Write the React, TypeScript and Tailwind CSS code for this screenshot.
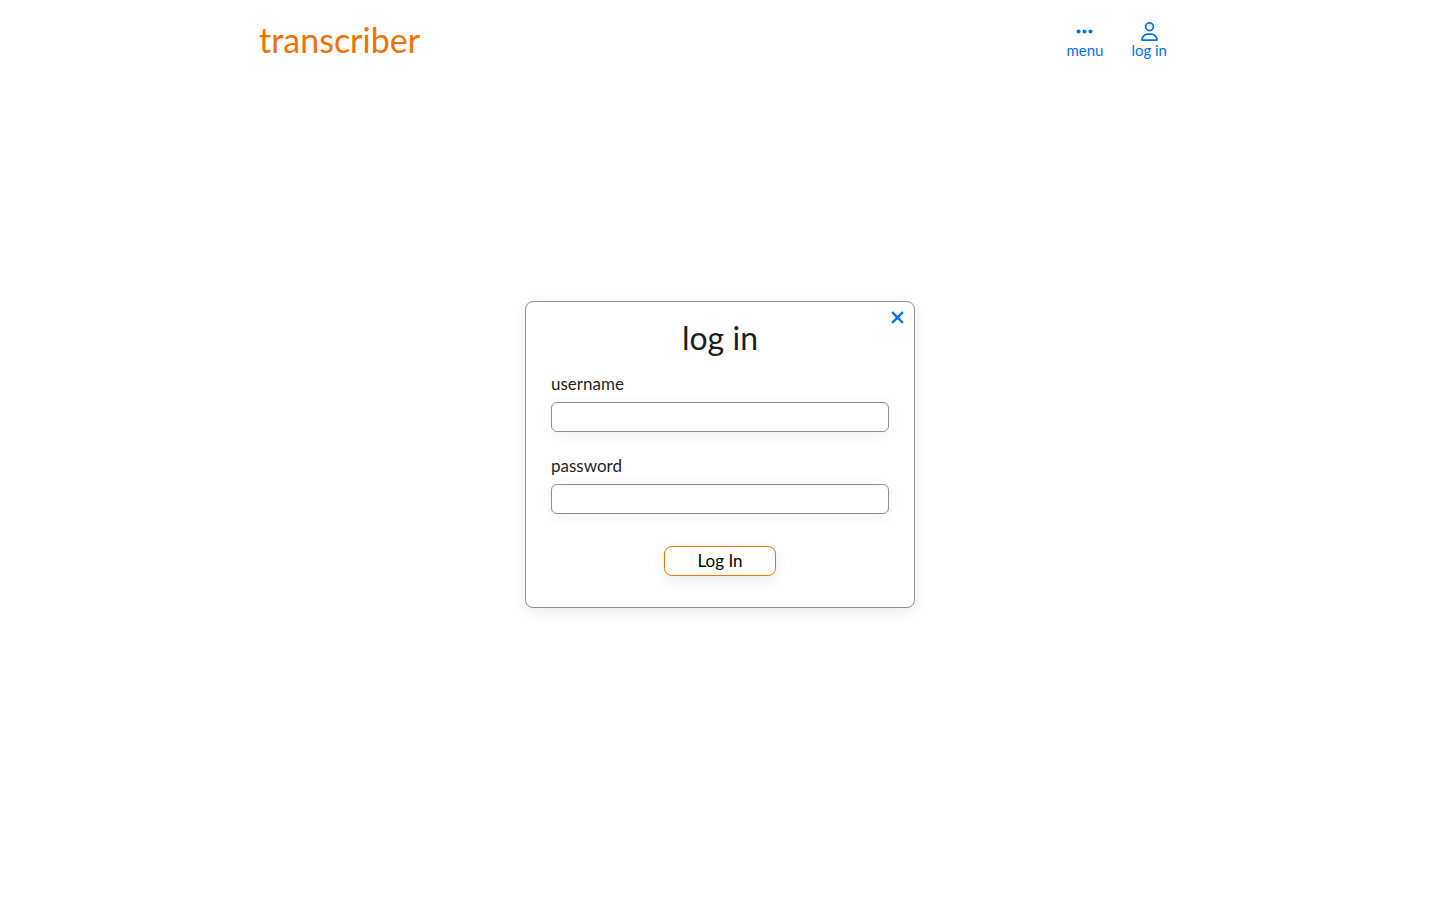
import { FaEllipsis, FaRegUser, FaXmark } from "react-icons/fa6";
import type { ReactNode } from "react";

function NavButton({ icon, label }: { icon: ReactNode; label: string }) {
  return (
    <button type="button" className="flex cursor-pointer flex-col items-center text-[15px] leading-[18px] text-[#0071eb]">
      {icon}
      <span>{label}</span>
    </button>
  );
}

function Field({ id, label, type }: { id: string; label: string; type: string }) {
  return (
    <div className="mb-5 flex flex-col">
      <label htmlFor={id} className="mb-1 text-[17px] leading-7">
        {label}
      </label>
      <input
        id={id}
        type={type}
        className="h-[30px] w-full rounded-md border border-[#8f8f8f] bg-white px-2 shadow-[0_2px_16px_rgba(0,0,0,0.06)] outline-none"
      />
    </div>
  );
}

export default function App() {
  return (
    <div className="flex min-h-screen flex-col bg-white font-['Lato',sans-serif] text-base text-[#1f1f1f]">
      <header className="mx-auto flex w-full max-w-[922px] items-start justify-between pr-[14px]">
        <a href="#" className="pt-4 text-[34px] leading-[48px] text-[#ee7200]">
          transcriber
        </a>
        <nav className="flex gap-7 pt-[22px]">
          <NavButton icon={<FaEllipsis className="h-[19px] w-[19px]" />} label="menu" />
          <NavButton icon={<FaRegUser className="h-[19px] w-[19px]" />} label="log in" />
        </nav>
      </header>
      <main className="flex flex-1 flex-col items-center justify-center pb-[55px]">
        <form
          onSubmit={(e) => e.preventDefault()}
          className="relative w-full max-w-[390px] rounded-lg border border-[#8f8f8f] bg-white px-[25px] pt-[10px] pb-[31px] shadow-[0_4px_16px_rgba(0,0,0,0.08)]"
        >
          <button type="button" aria-label="Close" className="absolute top-[6px] right-[7px] cursor-pointer text-[#0071eb]">
            <FaXmark className="h-[19px] w-[19px]" />
          </button>
          <h1 className="mb-[6px] text-center text-[32px] leading-[52px]">log in</h1>
          <Field id="username" label="username" type="text" />
          <Field id="password" label="password" type="password" />
          <button
            type="submit"
            className="mx-auto mt-8 flex h-[30px] w-28 cursor-pointer items-center justify-center rounded-lg border border-[#ee7200] bg-white text-[17px] text-black shadow-[0_4px_16px_rgba(0,0,0,0.08)]"
          >
            Log In
          </button>
        </form>
      </main>
    </div>
  );
}
